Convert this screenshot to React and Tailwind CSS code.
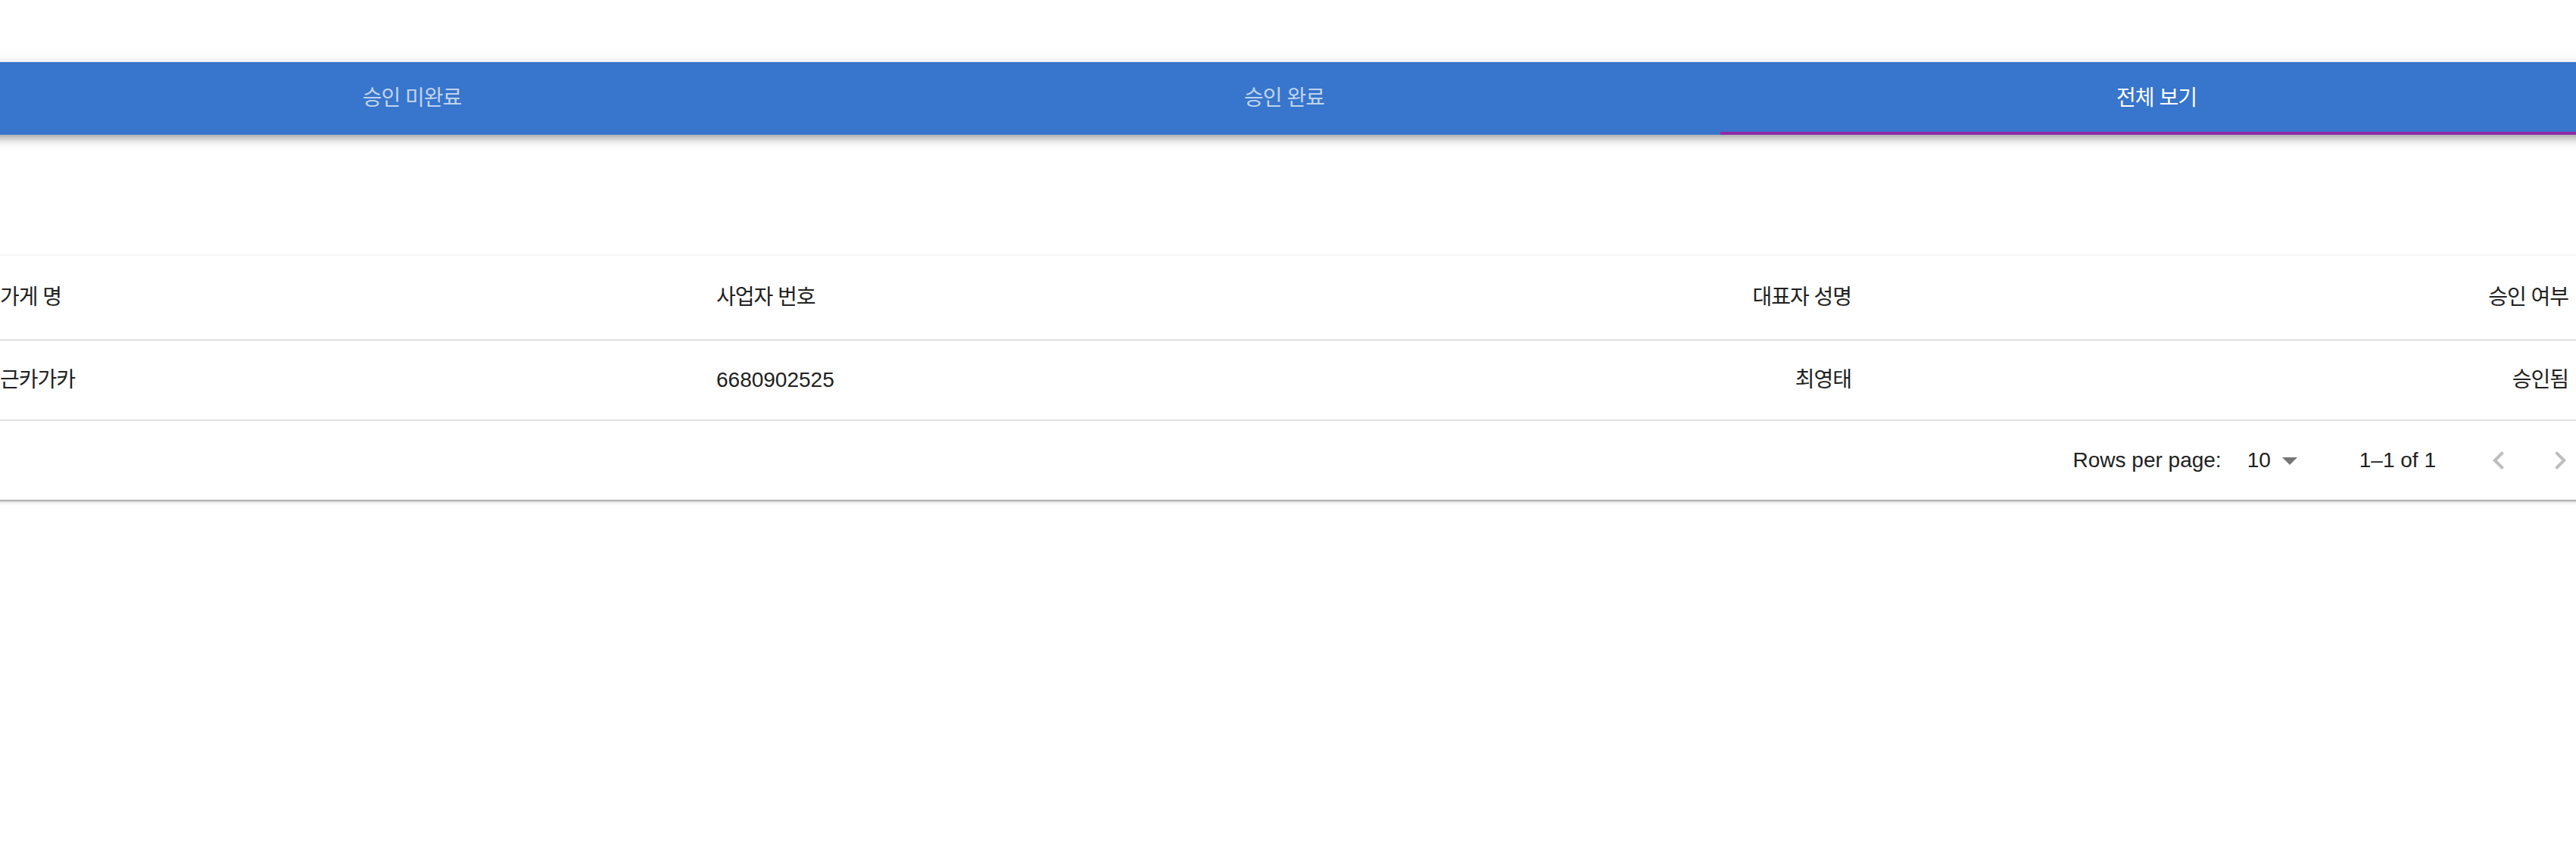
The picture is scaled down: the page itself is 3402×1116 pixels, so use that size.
import React from "react";

const FONT = { fontFamily: '"Liberation Sans", "Noto Sans CJK KR", sans-serif' };

function Tab({ label, selected }) {
  return (
    <div
      className={
        "flex-1 flex items-center justify-center pt-[4px] border-b-[4px] " +
        (selected ? "border-[#8e2ba7] text-white" : "border-transparent text-[#c0d4ef]")
      }
    >
      <span className="text-[28px] leading-none tracking-[-1px]">{label}</span>
    </div>
  );
}

function ChevronLeft() {
  return (
    <svg width="48" height="48" viewBox="0 0 24 24" className="block">
      <path d="M15.41 7.41L14 6l-6 6 6 6 1.41-1.41L10.83 12z" fill="#bdbdbd" />
    </svg>
  );
}

function ChevronRight() {
  return (
    <svg width="48" height="48" viewBox="0 0 24 24" className="block">
      <path d="M10 6L8.59 7.41 13.17 12l-4.58 4.59L10 18l6-6z" fill="#bdbdbd" />
    </svg>
  );
}

export default function App() {
  const cols = "grid grid-cols-[946px_782px_781px_947px]";
  return (
    <div className="w-[3402px] h-[1116px] overflow-hidden bg-white" style={FONT}>
      <div className="w-[3456px] -ml-[32px] pt-[82px]">
        <div className="relative z-10 h-[96px] bg-[#3875cc] flex shadow-[0_4px_8px_-2px_rgba(0,0,0,0.2),0_8px_10px_0_rgba(0,0,0,0.14),0_2px_20px_0_rgba(0,0,0,0.12)]">
          <Tab label="승인 미완료" />
          <Tab label="승인 완료" />
          <Tab label="전체 보기" selected />
        </div>

        <div className="mt-[160px] bg-white text-[#212121] text-[28px] shadow-[0_2px_2px_0_rgba(0,0,0,0.14),0_6px_2px_-4px_rgba(0,0,0,0.12),0_2px_6px_0_rgba(0,0,0,0.2)]">
          <div className={cols + " h-[112px] items-center border-b-2 border-[#e0e0e0]"}>
            <div className="pl-[32px] tracking-[-1px]">가게 명</div>
            <div className="pl-[32px] tracking-[-1px]">사업자 번호</div>
            <div className="pr-[32px] text-right tracking-[-1px]">대표자 성명</div>
            <div className="pr-[32px] text-right tracking-[-1px]">승인 여부</div>
          </div>
          <div className={cols + " h-[106px] items-center border-b-2 border-[#e0e0e0]"}>
            <div className="pl-[32px] tracking-[-1px]">근카가카</div>
            <div className="pl-[32px]">6680902525</div>
            <div className="pr-[32px] text-right tracking-[-1px]">최영태</div>
            <div className="pr-[32px] text-right tracking-[-1px]">승인됨</div>
          </div>
          <div className="h-[104px] flex items-center justify-end pr-[19px]">
            <span>Rows per page:</span>
            <span className="ml-[34px]">10</span>
            <svg width="20" height="10" viewBox="0 0 20 10" className="ml-[15px] mt-[2px] block">
              <polygon points="0,0 20,0 10,10" fill="#757575" />
            </svg>
            <span className="ml-[82px]">1–1 of 1</span>
            <div className="ml-[59px]">
              <ChevronLeft />
            </div>
            <div className="ml-[33px]">
              <ChevronRight />
            </div>
          </div>
        </div>
      </div>
    </div>
  );
}
